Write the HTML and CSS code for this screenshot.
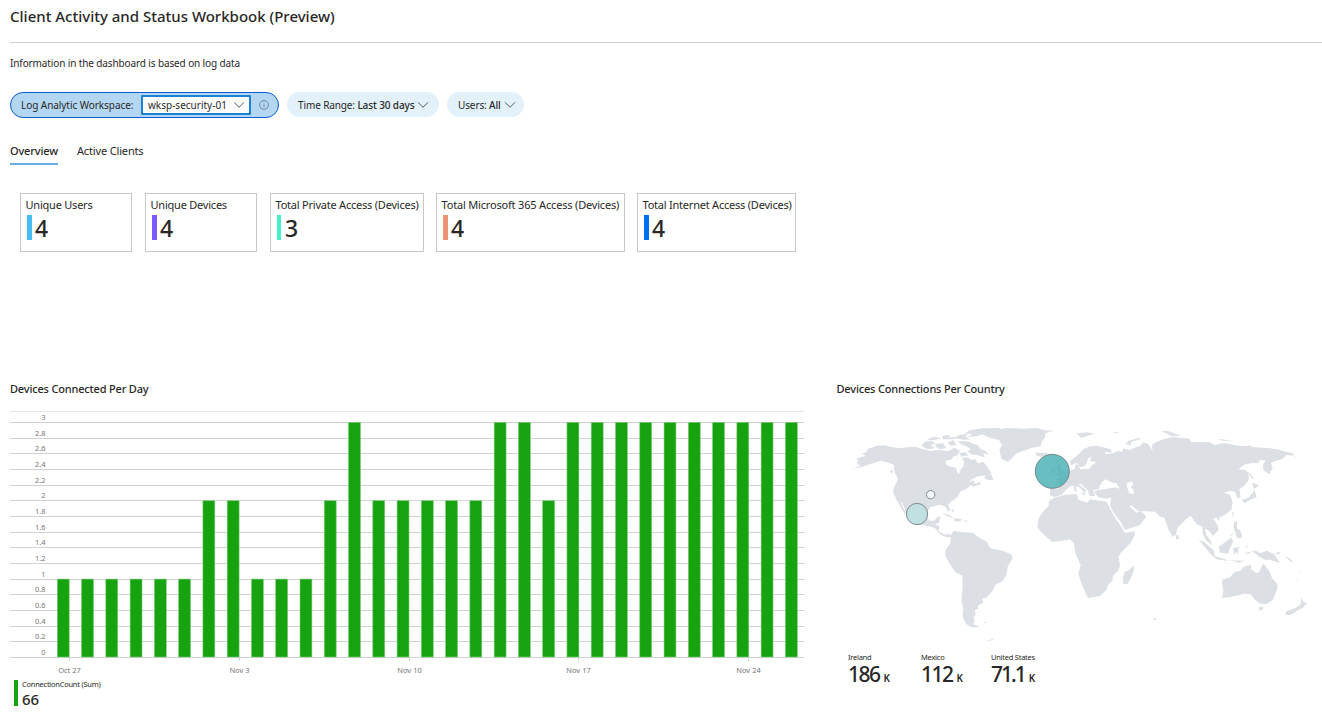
FILE: index.html
```html
<!DOCTYPE html>
<html lang="en">
<head>
<meta charset="utf-8">
<title>Client Activity and Status Workbook</title>
<link rel="stylesheet" href="styles.css">
</head>
<body>
<header class="page-head"><h1 class="page-title">Client Activity and Status Workbook (Preview)</h1></header>
<p class="intro">Information in the dashboard is based on log data</p>
<div class="filters">
  <div class="pill pill-active">
    <span class="pill-label">Log Analytic Workspace:</span>
    <span class="select"><span class="select-value">wksp-security-01</span><svg class="chev" viewBox="0 0 12 8"><path d="M1 1.3l5 5 5-5"/></svg></span>
    <svg class="info" viewBox="0 0 10 10"><circle cx="5" cy="5" r="4.4"/><path d="M5 4.2v3.3M5 2.3v1"/></svg>
  </div>
  <div class="pill pill-time"><span class="pill-text">Time Range: <b>Last 30 days</b></span><svg class="chev" viewBox="0 0 12 8"><path d="M1 1.3l5 5 5-5"/></svg></div>
  <div class="pill pill-users"><span class="pill-text">Users: <b>All</b></span><svg class="chev" viewBox="0 0 12 8"><path d="M1 1.3l5 5 5-5"/></svg></div>
</div>
<nav class="tabs"><span class="tab tab-on">Overview</span><span class="tab">Active Clients</span></nav>
<section class="tiles">
  <div class="tile tile-users"><span class="tile-name">Unique Users</span><span class="tile-value">4</span></div>
  <div class="tile tile-devices"><span class="tile-name">Unique Devices</span><span class="tile-value">4</span></div>
  <div class="tile tile-private"><span class="tile-name">Total Private Access (Devices)</span><span class="tile-value">3</span></div>
  <div class="tile tile-m365"><span class="tile-name">Total Microsoft 365 Access (Devices)</span><span class="tile-value">4</span></div>
  <div class="tile tile-internet"><span class="tile-name">Total Internet Access (Devices)</span><span class="tile-value">4</span></div>
</section>
<main class="panels">
  <section class="panel-chart">
    <h2 class="panel-title">Devices Connected Per Day</h2>
    <svg class="chart" id="chart" viewBox="0 0 794 270"></svg>
    <div class="legend"><span class="legend-name">ConnectionCount (Sum)</span><span class="legend-value">66</span></div>
  </section>
  <section class="panel-map">
    <h2 class="panel-title map-title">Devices Connections Per Country</h2>
    <svg class="map" viewBox="0 0 1446 720">
      <g class="land">
        <!-- North and Central America -->
        <path d="M30 180L62 168 50 160 55 152 50 145 78 138 64 130 80 127 82 118 110 107 135 106 150 110 180 115 200 112 225 110 245 116 270 122 300 120 325 124 343 113 360 122 352 136 337 141 337 148 318 152 316 160 325 168 348 174 352 188 357 192 362 178 370 170 372 155 366 143 384 142 395 150 404 146 414 160 430 155 440 168 448 180 455 190 440 196 415 199 395 208 386 218 402 210 403 222 420 216 423 222 400 230 393 225 380 236 362 244 352 262 332 276 325 284 330 300 325 306 317 290 300 284 285 288 272 291 262 303 260 320 269 333 285 331 292 321 302 320 297 338 285 341 299 350 295 363 312 373 330 374 332 382 318 381 302 374 284 354 260 347 236 344 214 330 198 305 187 280 181 274 197 309 194 312 181 290 170 270 160 250 160 238 170 215 174 206 165 190 162 178 162 164 144 158 124 152 110 156 85 164 65 171Z"/>
        <!-- Arctic islands -->
        <path d="M244 106L255 95 275 92 286 102 270 105 284 111 276 117 258 116ZM286 101L310 100 318 114 300 118 288 111ZM260 90L280 80 304 85 280 91ZM306 78L330 74 326 82 354 82 342 88 310 88ZM322 98L341 91 349 104 334 108ZM340 83L360 74 384 72 376 80 393 88 370 89ZM354 93L384 94 400 102 414 105 420 116 438 124 446 134 430 130 434 142 410 135 397 134 382 125 392 118 378 108 366 106ZM358 130L376 126 386 136 365 140ZM374 69L390 61 426 55 480 54 475 62 435 66 414 78 382 82 398 73ZM306 308L326 314 345 323 324 320ZM343 325L366 327 360 335 342 332ZM372 331L386 333 376 336ZM443 193L455 194 460 211 443 209 432 204ZM150 182L158 180 158 190 151 188ZM333 298l10 1-5 9z"/>
        <!-- Greenland, Iceland, Svalbard, Russian Arctic islands -->
        <path d="M418 72L455 61 500 54 550 56 590 54 612 61 641 62 616 70 616 82 606 94 602 108 574 114 560 119 530 130 516 144 504 156 484 146 478 120 486 105 477 90 450 83 432 76ZM586 128L620 128 624 135 605 141 588 136ZM710 70L740 67 765 72 748 76 724 84ZM818 66L838 67 825 70ZM856 102L866 92 898 83 902 87 874 96 872 106ZM964 64L985 63 1024 78 995 78ZM1132 86L1180 92 1148 92ZM1221 106l13 1-8 3zM1364 138l10 4-9-1z"/>
        <!-- Eurasia -->
        <path d="M690 152L709 139 730 118 750 109 774 107 812 118 816 128 794 125 798 133 820 130 832 123 846 125 850 115 868 120 890 110 900 109 910 97 925 103 938 122 935 105 950 95 975 86 1000 80 1050 87 1053 95 1110 97 1124 105 1152 99 1200 108 1232 108 1238 112 1285 114 1310 118 1362 131 1358 137 1340 134 1334 141 1326 148 1303 154 1293 160 1298 174 1288 193 1270 181 1269 164 1277 151 1260 150 1254 160 1235 159 1216 163 1195 178 1215 180 1226 190 1226 209 1211 229 1198 237 1202 262 1191 264 1185 245 1168 243 1152 248 1171 255 1178 278 1174 300 1150 317 1134 324 1120 324 1132 345 1136 359 1119 378 1105 361 1094 356 1099 375 1113 394 1116 406 1100 394 1088 371 1087 350 1070 343 1052 317 1038 328 1012 354 1008 374 998 381 986 360 973 323 962 321 945 305 915 304 895 303 874 286 868 289 890 308 903 302 919 320 900 345 855 360 844 338 820 307 810 286 813 262 800 266 775 262 762 245 775 240 797 237 825 232 840 236 830 222 810 215 780 224 777 237 760 241 765 258 750 258 742 240 723 222 715 222 738 240 735 250 718 232 706 228 690 229 680 237 665 254 644 261 630 256 630 235 655 236 660 224 650 208 669 197 689 183 704 177 706 163 716 166 720 178 748 177 756 165 772 156 750 154 755 139 744 146 738 165 722 172 709 158 694 166Z"/>
        <!-- British Isles and Mediterranean islands -->
        <path d="M649 164L660 163 662 175 677 190 665 197 646 196 655 184ZM632 183L643 174 645 188 632 191ZM702 228l6 0 2 17-7-1zM720 250l16-1-3 7z"/>
        <!-- Africa and Madagascar -->
        <path d="M640 264L675 254 710 252 716 270 742 278 750 268 800 275 812 300 830 330 849 358 855 369 884 364 885 374 872 398 843 428 836 440 840 468 834 482 818 498 818 512 804 524 799 540 780 558 744 564 728 530 715 492 722 464 706 430 702 400 690 388 668 392 636 396 620 382 600 362 592 350 596 325 610 304 626 288 626 275ZM880 466L882 480 872 506 862 522 850 522 849 502 854 486 868 480Z"/>
        <!-- South America -->
        <path d="M316 365L332 376 341 362 362 366 400 369 415 382 441 395 450 414 487 422 514 433 517 447 503 470 500 493 488 514 466 524 458 542 438 564 426 566 430 578 414 586 414 596 405 600 407 614 400 623 404 632 400 642 419 652 394 652 378 642 368 619 370 595 364 574 368 530 367 497 345 486 330 463 315 436 318 418 331 400 332 382ZM430 637l12-1-6 4zM438 694l20-8 2 3-12 4z"/>
        <!-- East and south-east Asia islands -->
        <path d="M1224 182L1241 204 1235 206ZM1236 218L1258 225 1242 238ZM1243 239L1250 262 1228 271 1214 280 1205 269 1225 264 1237 250ZM1176 306l6 2-4 14zM1132 324l8 0-5 10zM1183 334l8 3 0 18 10 7 6 16-7 8-10-4-2-10-8-21zM1170 378l12-13-8 13zM1008 373l8 4 0 10-8 1zM1076 390L1092 395 1122 422 1124 438 1154 447 1163 453 1130 448 1112 433 1095 412ZM1136 410L1156 396 1173 383 1180 394 1170 414 1164 431 1140 428ZM1180 414L1200 410 1192 420 1198 422 1191 426 1195 437 1187 426 1182 436ZM1218 405l5 3-3 9zM1210 429l24-3-8 6zM1168 451l44 1-15 6zM1234 422L1250 422 1260 430 1280 422 1303 433 1320 460 1290 449 1277 450 1260 441ZM1303 432l17-8-2 9zM1332 436l16 9 14 14-12-5zM1380 478l5 9-3 0zM1364 502l12 9-4-1z"/>
        <!-- Australia and New Zealand -->
        <path d="M1148 508L1168 503 1184 486 1202 482 1210 472 1218 468 1234 466 1232 477 1248 488 1256 488 1270 460 1281 475 1291 488 1296 504 1312 522 1312 538 1298 570 1280 582 1260 581 1242 567 1233 553 1212 551 1188 557 1168 562 1146 564 1150 542 1146 520ZM1258 590l13 0-4 11-10 0zM1384 562L1390 576 1402 578 1388 594 1374 600 1352 615 1335 614 1340 604 1364 595 1382 583Z M940 624l8 0-2 5-6 0z"/>
      </g>
      <g class="water">
        <path d="M785 216L797 208 815 218 831 220 830 233 808 230 784 232ZM860 220L876 214 880 224 872 230 882 242 880 252 868 250 862 234Z"/>
      </g>
      <circle class="dot dot-mx" cx="231" cy="312" r="32"/>
      <circle class="dot dot-us" cx="272" cy="254" r="12.5"/>
      <circle class="dot dot-ie" cx="637" cy="184" r="51"/>
    </svg>
    <div class="countries">
      <div class="country"><span class="country-name">Ireland</span><span class="country-value">186<small>K</small></span></div>
      <div class="country"><span class="country-name">Mexico</span><span class="country-value">112<small>K</small></span></div>
      <div class="country"><span class="country-name">United States</span><span class="country-value country-value-tight">71.1<small>K</small></span></div>
    </div>
  </section>
</main>
<script src="chart.js"></script>
</body>
</html>
```
FILE: styles.css
```css
* { box-sizing: border-box; }
body { margin: 0; width: 1322px; height: 714px; overflow: hidden; background: #fff; color: #292827; font-family: "Noto Sans", "Open Sans", sans-serif; font-size: 11px; }
h1, h2, p { margin: 0; }
span { white-space: nowrap; }
svg { display: block; flex-shrink: 0; }
.page-head { height: 43px; margin-left: 10px; padding-top: 6px; border-bottom: 1px solid #d2d0ce; }
.page-title { font-size: 15px; line-height: 21px; font-weight: 500; }
.intro { height: 49px; padding: 12px 0 0 10px; font-size: 10px; line-height: 16px; letter-spacing: -0.12px; }
.filters { display: flex; gap: 8px; height: 27px; padding-left: 10px; }
.pill { display: flex; align-items: center; height: 25px; padding-left: 11px; border-radius: 13px; background: #e3f1fb; font-size: 10px; letter-spacing: -0.12px; }
.pill b { font-weight: 500; }
.pill .chev { width: 12px; height: 8px; margin-left: 3px; }
.chev path { fill: none; stroke: #5a5958; stroke-width: 1; }
.pill-active { width: 269px; height: 26px; padding-left: 10px; border: 1px solid #0b5cd5; background: #b3d6f2; }
.pill-label { width: 120px; letter-spacing: -0.06px; }
.select { display: flex; align-items: center; width: 110px; height: 20px; padding-left: 5px; border: 2px solid #1a83d6; border-radius: 1px; background: #fff; letter-spacing: 0; }
.select-value { width: 82px; }
.info { width: 10px; height: 10px; margin-left: 8px; fill: none; stroke: #697986; stroke-width: 0.8; }
.pill-time { width: 152px; }
.pill-users { width: 77px; }
.tabs { display: flex; gap: 19px; height: 74px; padding: 22px 0 0 10px; letter-spacing: -0.15px; }
.tab { height: 24px; line-height: 20px; }
.tab-on { font-weight: 500; border-bottom: 2px solid #69afe5; }
.tiles { display: flex; height: 188px; padding-left: 20px; }
.tile { display: flex; flex-direction: column; height: 59px; padding: 2px 0 0 5px; border: 1px solid #c8c8c8; }
.tile-name { height: 19px; margin-left: -0.5px; line-height: 18px; letter-spacing: -0.22px; }
.tile-m365 .tile-name { letter-spacing: -0.18px; }
.tile-value { height: 25px; margin-left: 1px; padding-left: 3px; border-left: 5px solid; font-size: 23px; line-height: 27px; font-weight: 550; }
.tile-users { width: 112px; margin-right: 13px; }
.tile-devices { width: 112px; margin-right: 13px; }
.tile-private { width: 154px; margin-right: 12px; }
.tile-m365 { width: 189px; margin-right: 12px; }
.tile-internet { width: 159px; }
.tile-users .tile-value { border-color: #47bdf5; }
.tile-devices .tile-value { border-color: #7e58ff; }
.tile-private .tile-value { border-width: 0 0 0 4px; padding-left: 4px; border-color: #44f1c8; }
.tile-m365 .tile-value { border-color: #ec9373; }
.tile-internet .tile-value { border-color: #026ff2; }
.panels { display: flex; }
.panel-chart { flex: none; width: 836px; padding-left: 10px; }
.panel-map { flex: none; width: 486px; }
.panel-title { height: 29px; font-size: 11px; line-height: 16px; font-weight: 500; letter-spacing: -0.18px; }
.map-title { padding-left: 0.5px; }
.chart { width: 794px; height: 270px; }
.grid { stroke: #d2d2d2; }
.grid-top { stroke: #e6e6e6; }
.bar { fill: #16a30f; stroke: #7cca78; stroke-width: 0.6; }
.axis { fill: #767676; font-size: 7.5px; }
.axis-y { text-anchor: end; }
.axis-x { text-anchor: middle; }
.legend { display: flex; flex-direction: column; width: 140px; height: 26px; margin-left: 4px; border-left: 4px solid #16a30f; padding-left: 4px; }
.legend-name { font-size: 7.5px; line-height: 9px; letter-spacing: -0.25px; }
.legend-value { font-size: 15px; line-height: 20px; font-weight: 500; }
.map { width: 482px; height: 240px; margin-left: 4px; }
.land { fill: #dce0e5; }
.water { fill: #fff; }
.dot { stroke: #6c777b; stroke-width: 2.5; }
.dot-mx { fill: #c1e0e1; }
.dot-us { fill: #f5f8f9; }
.dot-ie { fill: #43aeb2; fill-opacity: 0.8; }
.countries { display: grid; grid-template-columns: 73px 70px 80px; padding: 2px 0 0 12px; }
.country { display: flex; flex-direction: column; }
.country-name { font-size: 7.5px; line-height: 10px; letter-spacing: -0.25px; }
.country-value { font-size: 21px; line-height: 25px; font-weight: 500; letter-spacing: -1.5px; }
.country-value-tight { letter-spacing: -2px; }
.country-value small { margin-left: 4px; font-size: 10px; font-weight: 600; letter-spacing: 0; }
```
FILE: chart.js
```
const values = [1,1,1,1,1,1,2,2,1,1,1,2,3,2,2,2,2,2,3,3,2,3,3,3,3,3,3,3,3,3,3];
const baseline = 247;
const unit = 78.33;
let out = '<path class="grid grid-top" d="M0 1.5H794"/>';
for (let i = 0; i <= 15; i++) {
  const y = Math.round(baseline - i * unit / 5);
  out += `<path class="grid" d="M0 ${y + 0.5}H794"/>`;
  out += `<text class="axis axis-y" x="35.5" y="${y - 2.5}">${+(i * 0.2).toFixed(1)}</text>`;
}
values.forEach((v, i) => {
  out += `<rect class="bar" x="${47.3 + i * 24.27}" y="${baseline + 0.4 - v * unit}" width="11.9" height="${v * unit - 0.4}"/>`;
});
['Oct 27', 'Nov 3', 'Nov 10', 'Nov 17', 'Nov 24'].forEach((t, i) => {
  const x = Math.floor(59.4 + i * 169.8) + 0.5;
  out += `<path class="grid" d="M${x} 248v3"/><text class="axis axis-x" x="${x}" y="263">${t}</text>`;
});
document.getElementById('chart').innerHTML = out;
```
